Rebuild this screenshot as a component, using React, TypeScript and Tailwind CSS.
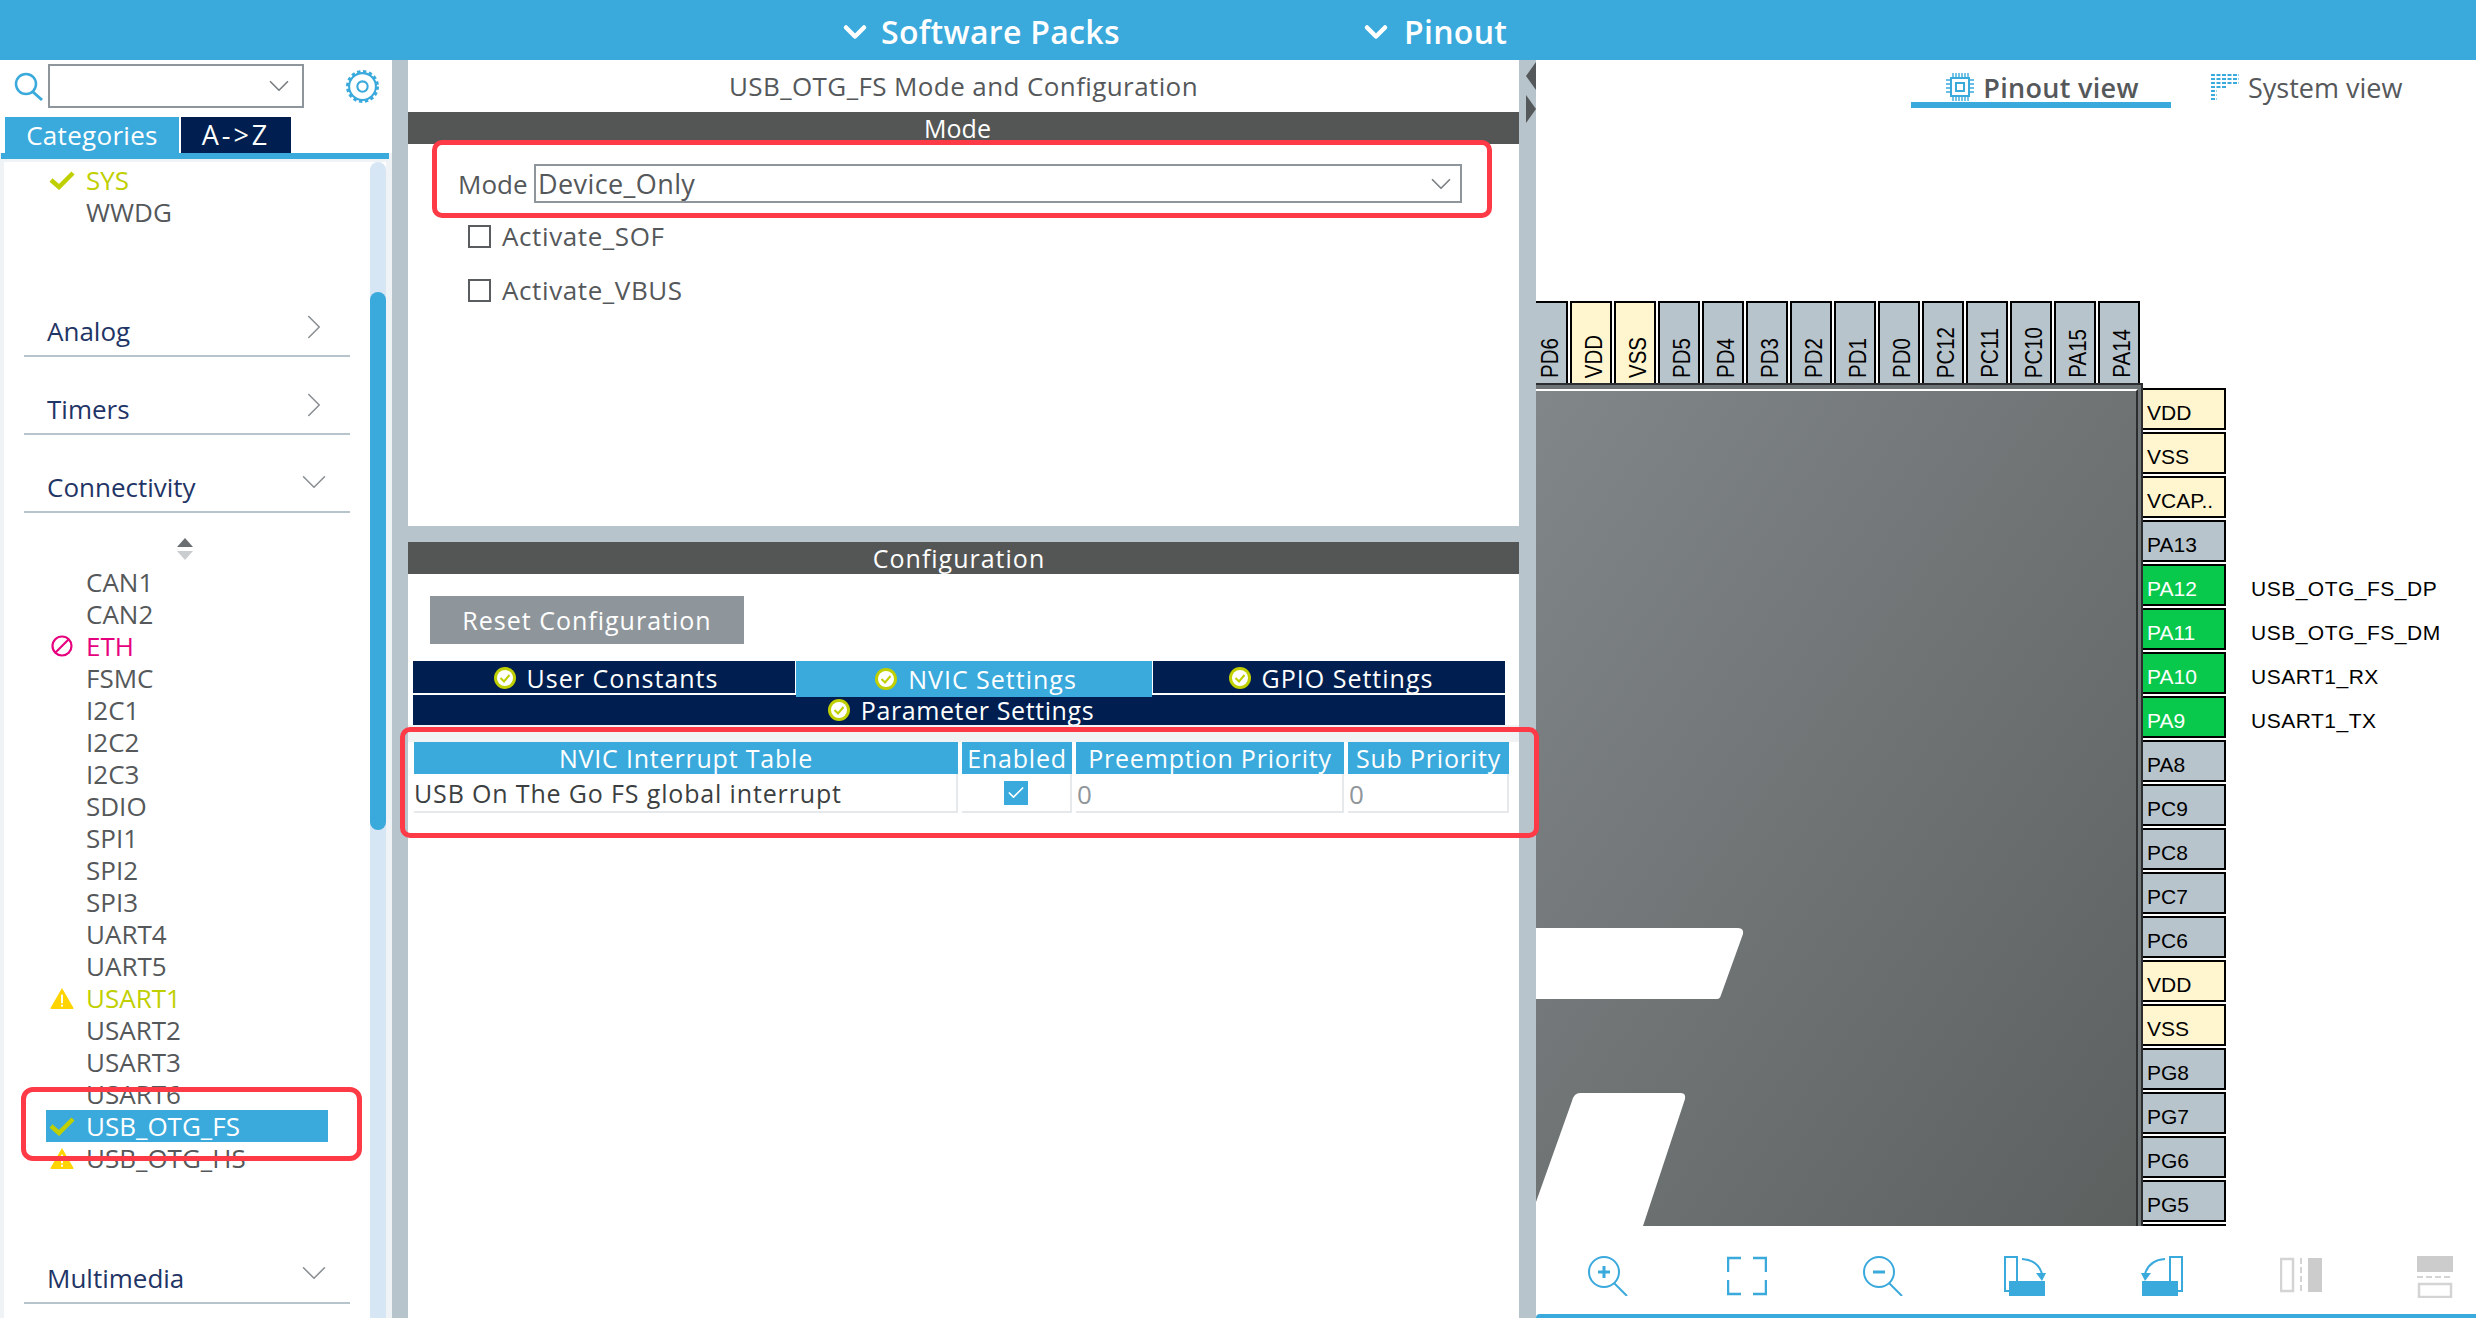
import React from "react";
import { ChevronDown, ChevronRight, Check } from "lucide-react";

const BLUE = "#3aa9dc";

function Warn({ className = "" }: { className?: string }) {
  return (
    <svg viewBox="0 0 26 24" className={className}>
      <path d="M13 1 L25 22 Q25.5 23 24 23 H2 Q.5 23 1 22 Z" fill="#ffd400" />
      <rect x="12" y="8" width="2" height="9" fill="#fff" />
      <rect x="12" y="18.5" width="2" height="2" fill="#fff" />
    </svg>
  );
}

function Tick({ className = "" }: { className?: string }) {
  return (
    <svg viewBox="0 0 26 20" className={className}>
      <path d="M2 10 L10 17 L24 3" fill="none" stroke="#bfcf00" strokeWidth="4.5" />
    </svg>
  );
}

function Section({ title, open, cls }: { title: string; open?: boolean; cls: string }) {
  return (
    <div className={`ml-[20px] mr-[20px] h-[40px] flex items-center justify-between pl-[23px] pr-[15px] pb-[10px] border-b-2 border-[#b8c4cc] ${cls}`}>
      <span className="text-[26px] leading-none text-[#1f3566]">{title}</span>
      {open ? (
        <ChevronDown size={42} strokeWidth={0.9} className="text-[#8a8f93] -mt-[10px]" />
      ) : (
        <ChevronRight size={42} strokeWidth={0.9} className="text-[#8a8f93] -mt-[8px]" />
      )}
    </div>
  );
}

type St = "ok" | "warn" | "warnDim" | "no" | "sel";

function Item({ name, state }: { name: string; state?: St }) {
  const color =
    state === "sel" ? "text-white" : state === "no" ? "text-[#e6007e]" : state === "ok" || state === "warn" ? "text-[#bfcf00]" : "text-[#55585a]";
  return (
    <div className={`ml-[42px] w-[282px] h-[32px] flex items-center ${state === "sel" ? "bg-[#3aa9dc]" : ""}`}>
      <div className="w-[40px] flex justify-center pr-[8px] shrink-0">
        {state === "ok" || state === "sel" ? <Tick className="w-[26px] h-[20px]" /> : null}
        {state === "warn" || state === "warnDim" ? <Warn className="w-[26px] h-[23px]" /> : null}
        {state === "no" ? (
          <svg viewBox="0 0 24 24" className="w-[24px] h-[24px]">
            <circle cx="12" cy="12" r="9.5" fill="none" stroke="#e6007e" strokeWidth="2.2" />
            <path d="M5.5 18.5 L18.5 5.5" stroke="#e6007e" strokeWidth="2.2" />
          </svg>
        ) : null}
      </div>
      <span className={`text-[26px] leading-none ${color}`}>{name}</span>
    </div>
  );
}

function Sidebar() {
  const items: [string, St?][] = [
    ["CAN1"], ["CAN2"], ["ETH", "no"], ["FSMC"], ["I2C1"], ["I2C2"], ["I2C3"], ["SDIO"], ["SPI1"], ["SPI2"], ["SPI3"],
    ["UART4"], ["UART5"], ["USART1", "warn"], ["USART2"], ["USART3"], ["USART6"], ["USB_OTG_FS", "sel"], ["USB_OTG_HS", "warnDim"],
  ];
  return (
    <aside className="w-[392px] shrink-0 flex flex-col bg-[#f0f3f6] relative">
      <div className="h-[57px] bg-white flex items-start pt-[4px] pl-[14px] shrink-0">
        <svg viewBox="0 0 30 30" className="w-[30px] h-[30px] mt-[8px]">
          <circle cx="12" cy="12" r="10" fill="none" stroke={BLUE} strokeWidth="2.5" />
          <path d="M19 20 L28 28" stroke={BLUE} strokeWidth="3" />
        </svg>
        <div className="ml-[4px] w-[256px] h-[44px] border-2 border-[#8f969b] flex items-center justify-end pr-[6px]">
          <ChevronDown size={34} strokeWidth={1.2} className="text-[#7d8184]" />
        </div>
        <svg viewBox="0 0 32 32" className="ml-[42px] mt-[6px] w-[33px] h-[33px]">
          <circle cx="16" cy="16" r="13" fill="none" stroke={BLUE} strokeWidth="2" />
          <circle cx="16" cy="16" r="14.5" fill="none" stroke={BLUE} strokeWidth="3" strokeDasharray="3.2 2.5" />
          <circle cx="16" cy="16" r="5" fill="none" stroke={BLUE} strokeWidth="2" />
        </svg>
      </div>
      <div className="bg-white pl-[5px] flex gap-[2px] h-[36px] shrink-0">
        <div className="w-[174px] bg-[#3aa9dc] text-white text-[26px] leading-[36px] text-center tracking-[0.3px]">Categories</div>
        <div className="w-[110px] bg-[#001f50] text-white text-[27px] leading-[36px] text-center tracking-[3px]">A-&gt;Z</div>
      </div>
      <div className="h-[6px] bg-[#3aa9dc] ml-[1px] mr-[3px] shrink-0" />
      <div className="flex-1 min-h-0 mt-[3px] ml-[4px] mr-[6px] bg-white flex">
        <div className="flex-1 min-w-0 flex flex-col pt-[2px] overflow-hidden">
          <Item name="SYS" state="ok" />
          <Item name="WWDG" />
          <Section title="Analog" cls="mt-[89px]" />
          <Section title="Timers" cls="mt-[38px]" />
          <Section title="Connectivity" open cls="mt-[38px]" />
          <div className="h-[53px] flex flex-col items-center pt-[25px] gap-[4px] ml-[-4px]">
            <div className="w-0 h-0 border-x-[8px] border-x-transparent border-b-[9px] border-b-[#6a6e71]" />
            <div className="w-0 h-0 border-x-[8px] border-x-transparent border-t-[9px] border-t-[#c9cdd0]" />
          </div>
          {items.map(([n, s]) => (
            <Item key={n} name={n} state={s} />
          ))}
          <Section title="Multimedia" open cls="mt-[90px]" />
        </div>
        <div className="w-[16px] shrink-0 bg-[#d6e6f4] rounded-t-lg">
          <div className="mt-[130px] h-[538px] rounded-lg bg-[#3aa9dc]" />
        </div>
      </div>
      <div className="absolute left-[21px] top-[1027px] w-[341px] h-[74px] rounded-[12px] border-[5px] border-[#ff3a47]" />
    </aside>
  );
}

function TabMark() {
  return (
    <svg viewBox="0 0 24 24" className="w-[24px] h-[24px]">
      <circle cx="12" cy="12" r="11" fill="#bfcf00" />
      <circle cx="12" cy="12" r="8" fill="#fff" />
      <path d="M7.5 12 L11 15.5 L16.5 9" fill="none" stroke="#bfcf00" strokeWidth="2" />
    </svg>
  );
}

function Tab({ label, w, active }: { label: string; w: string; active?: boolean }) {
  return (
    <div className={`${w} ${active ? "h-[36px] bg-[#3aa9dc] relative z-10" : "h-[32px] pt-[2px] bg-[#001f50]"} flex items-center justify-center gap-[10px] pl-[3px] text-white text-[25px] leading-none tracking-[1px]`}>
      <TabMark />
      <span>{label}</span>
    </div>
  );
}

function Main() {
  const Head = ({ t }: { t: string }) => (
    <div className="h-[32px] bg-[#3aa9dc] text-white text-[25px] leading-[32px] text-center tracking-[0.8px] whitespace-nowrap overflow-hidden">{t}</div>
  );
  const Cb = ({ label }: { label: string }) => (
    <div className="h-[54px] flex items-center pl-[60px] gap-[11px]">
      <div className="w-[23px] h-[23px] border-2 border-[#5a5d60]" />
      <span className="text-[26px] leading-none text-[#55585a] tracking-[0.6px]">{label}</span>
    </div>
  );
  return (
    <main className="w-[1111px] shrink-0 flex flex-col bg-white relative">
      <div className="h-[52px] flex items-center justify-center text-[26px] leading-none text-[#55585a] tracking-[0.4px] shrink-0">USB_OTG_FS Mode and Configuration</div>
      <div className="h-[32px] pr-[12px] bg-[#545655] text-white text-[25px] leading-[32px] text-center shrink-0">Mode</div>
      <div className="h-[382px] shrink-0 pt-[20px]">
        <div className="flex items-center pl-[50px] h-[39px]">
          <span className="text-[26px] leading-none text-[#55585a] w-[76px]">Mode</span>
          <div className="w-[928px] h-[39px] border-2 border-[#8f969b] flex items-center justify-between pl-[2px] pr-[2px]">
            <span className="text-[27px] leading-none text-[#55585a] tracking-[0.4px]">Device_Only</span>
            <ChevronDown size={34} strokeWidth={1.2} className="text-[#7d8184]" />
          </div>
        </div>
        <div className="mt-[6px]">
          <Cb label="Activate_SOF" />
          <Cb label="Activate_VBUS" />
        </div>
      </div>
      <div className="h-[16px] bg-[#b8c4cc] shrink-0" />
      <div className="h-[32px] pr-[9px] bg-[#545655] text-white text-[25px] leading-[32px] text-center tracking-[1px] shrink-0">Configuration</div>
      <div className="ml-[22px] mt-[22px] w-[314px] h-[48px] bg-[#8f969b] text-white text-[25px] leading-[48px] text-center tracking-[1px] shrink-0">Reset Configuration</div>
      <div className="mt-[17px] ml-[5px] w-[1092px] flex items-start h-[34px] gap-[1px] shrink-0">
        <Tab label="User Constants" w="w-[382px]" />
        <Tab label="NVIC Settings" w="w-[356px]" active />
        <Tab label="GPIO Settings" w="w-[352px]" />
      </div>
      <div className="ml-[5px] w-[1092px] h-[30px] bg-[#001f50] flex items-center justify-center gap-[10px] pl-[3px] text-white text-[25px] leading-none tracking-[0.6px] shrink-0">
        <TabMark />
        <span>Parameter Settings</span>
      </div>
      <div className="h-[17px] bg-[#f0f2f4] shrink-0" />
      <div className="ml-[6px] grid grid-cols-[544px_110px_268px_161px] gap-x-[4px] shrink-0">
        <Head t="NVIC Interrupt Table" />
        <Head t="Enabled" />
        <Head t="Preemption Priority" />
        <Head t="Sub Priority" />
        <div className="h-[39px] pt-[2px] border-b-2 border-r-2 border-[#e6e9ec] flex items-center text-[25px] leading-none text-[#3c3f41] tracking-[0.85px]">USB On The Go FS global interrupt</div>
        <div className="h-[39px] border-b-2 border-r-2 border-[#e6e9ec] flex items-center justify-center">
          <div className="w-[24px] h-[24px] bg-[#3aa9dc] flex items-center justify-center">
            <Check size={20} strokeWidth={2} color="#fff" />
          </div>
        </div>
        <div className="h-[39px] pt-[2px] pl-[1px] border-b-2 border-r-2 border-[#e6e9ec] flex items-center text-[26px] leading-none text-[#8f969b]">0</div>
        <div className="h-[39px] pt-[2px] pl-[1px] border-b-2 border-r-2 border-[#e6e9ec] flex items-center text-[26px] leading-none text-[#8f969b]">0</div>
      </div>
      <div className="absolute left-[24px] top-[80px] w-[1060px] h-[78px] rounded-[10px] border-[5px] border-[#ff3a47]" />
      <div className="absolute left-[-8px] top-[667px] w-[1139px] h-[111px] rounded-[10px] border-[5px] border-[#ff3a47] z-20" />
    </main>
  );
}

function TopPin({ n, y }: { n: string; y?: boolean }) {
  return (
    <div className={`w-[42px] h-[82px] shrink-0 border-2 border-b-0 border-black flex items-end justify-center pb-[5px] pl-[7px] ${y ? "bg-[#fff6cf]" : "bg-[#b8c4cc]"}`}>
      <span className="[writing-mode:vertical-rl] rotate-180 text-[20.5px] leading-none text-black scale-x-[1.14] font-['Liberation_Sans',sans-serif]">{n}</span>
    </div>
  );
}

function SidePin({ n, kind, label }: { n: string; kind?: "y" | "g"; label?: string }) {
  const bg = kind === "y" ? "bg-[#fff6cf]" : kind === "g" ? "bg-[#08c94b]" : "bg-[#b8c4cc]";
  const col = kind === "g" ? "text-white" : "text-black";
  return (
    <div className="h-[44px] shrink-0 flex items-start">
      <div className={`w-[83px] h-[42px] border-2 border-l-0 border-black flex items-end pl-[4px] pb-[5px] ${bg}`}>
        <span className={`text-[21px] leading-none ${col} font-['Liberation_Sans',sans-serif]`}>{n}</span>
      </div>
      {label ? <span className="ml-[25px] mt-[14px] text-[21px] leading-none text-black font-['Liberation_Sans',sans-serif] tracking-[0.5px]">{label}</span> : null}
    </div>
  );
}

function Right() {
  const top: [string, boolean?][] = [["PD6"], ["VDD", true], ["VSS", true], ["PD5"], ["PD4"], ["PD3"], ["PD2"], ["PD1"], ["PD0"], ["PC12"], ["PC11"], ["PC10"], ["PA15"], ["PA14"]];
  const side: [string, ("y" | "g")?, string?][] = [
    ["VDD", "y"], ["VSS", "y"], ["VCAP..", "y"], ["PA13"], ["PA12", "g", "USB_OTG_FS_DP"], ["PA11", "g", "USB_OTG_FS_DM"], ["PA10", "g", "USART1_RX"], ["PA9", "g", "USART1_TX"],
    ["PA8"], ["PC9"], ["PC8"], ["PC7"], ["PC6"], ["VDD", "y"], ["VSS", "y"], ["PG8"], ["PG7"], ["PG6"], ["PG5"], [""],
  ];
  return (
    <section className="flex-1 min-w-0 flex flex-col overflow-hidden bg-white">
      <div className="h-[48px] shrink-0 flex items-start">
        <div className="ml-[375px] w-[260px] h-[48px] border-b-[6px] border-[#3aa9dc] flex items-center justify-center gap-[9px] pt-[12px] pl-[3px]">
          <svg viewBox="0 0 28 28" className="w-[28px] h-[28px]" fill="none" stroke={BLUE}>
            <rect x="5" y="5" width="18" height="18" strokeWidth="2" />
            <rect x="10" y="10" width="8" height="8" strokeWidth="2" />
            <path d="M7 0v4M10 0v4M13 0v4M16 0v4M19 0v4M22 0v4M7 24v4M10 24v4M13 24v4M16 24v4M19 24v4M22 24v4M0 7h4M0 11h4M0 15h4M0 19h4M24 7h4M24 11h4M24 15h4M24 19h4" strokeWidth="1.4" />
          </svg>
          <span className="text-[27px] leading-none font-semibold text-[#55585a] tracking-[0.3px]">Pinout view</span>
        </div>
        <div className="ml-[39px] h-[48px] pt-[6px] flex items-center gap-[8px]">
          <svg viewBox="0 0 30 28" className="w-[30px] h-[28px]" stroke={BLUE} strokeWidth="2" strokeDasharray="4 1.5" fill="none">
            <path d="M1 2h28M1 6h28M1 10h28M1 14h16M1 18h6M1 22h6M1 26h6" />
          </svg>
          <span className="text-[27px] leading-none text-[#55585a]">System view</span>
        </div>
      </div>
      <div className="mt-[193px] h-[82px] -ml-[10px] flex gap-[2px] shrink-0">
        {top.map(([n, y]) => (
          <TopPin key={n} n={n} y={y} />
        ))}
      </div>
      <div className="h-[843px] shrink-0 flex overflow-hidden">
        <div className="w-[607px] shrink-0 h-full relative bg-[#6e7376] border-t-2 border-r-2 border-[#2b2d2f] pt-[4px] pr-[3px]">
          <div className="h-full border-t-2 border-t-white border-r-2 border-r-[#2b2d2f] bg-linear-to-br from-[#818689] to-[#5c605f]" />
          <svg viewBox="0 0 210 843" className="absolute left-0 top-[-2px] w-[210px] h-[843px]" fill="#fff">
            <path d="M0 545 H202 Q208 545 207 551 L185 612 Q184 616 181 616 H0 Z" />
            <path d="M44 710 H145 Q150 710 149 716 L107 843 H0 V819 L36 718 Q38 710 44 710 Z" />
          </svg>
        </div>
        <div className="flex-1 pt-[5px]">
          {side.map(([n, k, l], i) => (
            <SidePin key={i} n={n} kind={k} label={l} />
          ))}
        </div>
      </div>
      <div className="flex-1 min-h-0 flex items-start pt-[30px] relative">
        <div className="pl-[52px] flex items-start">
          <svg viewBox="0 0 40 40" className="w-[40px] h-[40px]" fill="none" stroke={BLUE} strokeWidth="2">
            <circle cx="16" cy="16" r="15" />
            <path d="M26 27 L39 40" />
            <path d="M16 10v12M10 16h12" strokeWidth="3" />
          </svg>
          <svg viewBox="0 0 40 40" className="ml-[99px] w-[40px] h-[40px]" fill="none" stroke={BLUE} strokeWidth="2.5">
            <path d="M1 16V2H14M26 2H39V16M39 24V38H26M14 38H1V24" />
          </svg>
          <svg viewBox="0 0 40 40" className="ml-[96px] w-[40px] h-[40px]" fill="none" stroke={BLUE} strokeWidth="2">
            <circle cx="16" cy="16" r="15" />
            <path d="M26 27 L39 40" />
            <path d="M10 16h12" strokeWidth="3" />
          </svg>
          <svg viewBox="0 0 42 40" className="ml-[101px] w-[42px] h-[40px]" fill="none" stroke={BLUE} strokeWidth="2">
            <rect x="1" y="1" width="12" height="34" />
            <rect x="5" y="25" width="36" height="15" fill={BLUE} stroke="none" />
            <path d="M18 3 Q34 4 38 18" />
            <path d="M32 17 H42 L38 25 Z" fill={BLUE} stroke="none" />
          </svg>
          <svg viewBox="0 0 42 40" className="ml-[95px] w-[42px] h-[40px] -scale-x-100" fill="none" stroke={BLUE} strokeWidth="2">
            <rect x="1" y="1" width="12" height="34" />
            <rect x="5" y="25" width="36" height="15" fill={BLUE} stroke="none" />
            <path d="M18 3 Q34 4 38 18" />
            <path d="M32 17 H42 L38 25 Z" fill={BLUE} stroke="none" />
          </svg>
          <svg viewBox="0 0 42 38" className="ml-[97px] w-[42px] h-[38px]" fill="none">
            <rect x="1" y="3" width="12" height="32" stroke="#d4d4d4" strokeWidth="2.5" />
            <path d="M21 2V36" stroke="#d4d4d4" strokeWidth="2" strokeDasharray="6 3" />
            <rect x="28" y="2" width="14" height="34" fill="#cccccc" />
          </svg>
          <svg viewBox="0 0 36 42" className="ml-[95px] w-[36px] h-[42px]" fill="none">
            <rect x="0" y="0" width="36" height="16" fill="#cccccc" />
            <path d="M0 21H36" stroke="#d4d4d4" strokeWidth="2" strokeDasharray="6 3" />
            <rect x="2" y="28" width="32" height="13" stroke="#d4d4d4" strokeWidth="2.5" />
          </svg>
        </div>
        <div className="absolute left-0 right-0 bottom-0 h-[4px] bg-[#3aa9dc] rounded-tl-md" />
      </div>
    </section>
  );
}

function Splitter({ w, arrows }: { w: string; arrows?: boolean }) {
  return (
    <div className={`${w} shrink-0 bg-[#b8c4cc] flex flex-col items-end`}>
      {arrows ? (
        <>
          <div className="mt-[2px] w-0 h-0 border-y-[14px] border-y-transparent border-r-[10px] border-r-[#55585a]" />
          <div className="mt-[5px] w-0 h-0 border-y-[14px] border-y-transparent border-l-[10px] border-l-[#55585a]" />
        </>
      ) : null}
    </div>
  );
}

export default function App() {
  return (
    <div className="w-[2476px] h-[1318px] overflow-hidden bg-white flex flex-col font-['Open_Sans',sans-serif]">
      <header className="h-[60px] shrink-0 pt-[3px] bg-[#3aa9dc] relative flex items-center text-white text-[32px] leading-none font-semibold tracking-[0.3px]">
        <div className="ml-[837px] w-[521px] flex items-center gap-[8px]">
          <ChevronDown size={36} strokeWidth={3} />
          <span>Software Packs</span>
        </div>
        <div className="flex items-center gap-[10px]">
          <ChevronDown size={36} strokeWidth={3} />
          <span>Pinout</span>
        </div>
      </header>
      <div className="flex-1 min-h-0 flex">
        <Sidebar />
        <Splitter w="w-[16px]" />
        <Main />
        <Splitter w="w-[17px]" arrows />
        <Right />
      </div>
    </div>
  );
}
